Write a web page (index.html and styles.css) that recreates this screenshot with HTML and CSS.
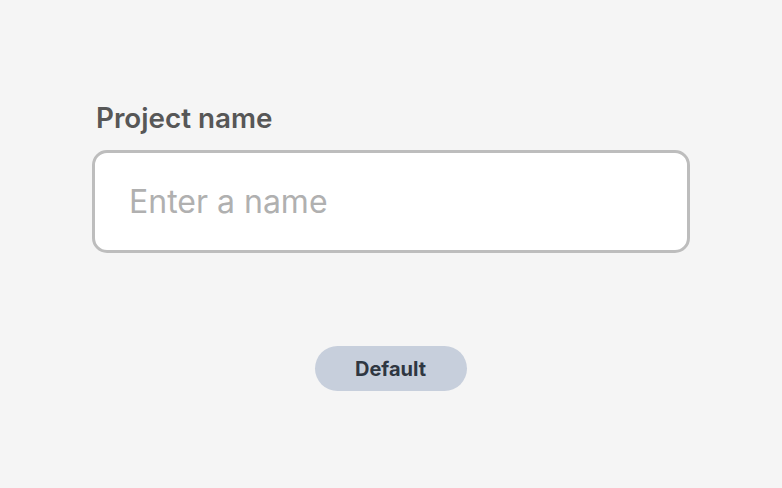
FILE: index.html
```html
<!DOCTYPE html>
<html>
<head>
<meta charset="utf-8">
<link rel="stylesheet" href="styles.css">
</head>
<body>
<div class="page">
  <div class="field">
    <label class="label" for="name">Project name</label>
    <input class="input" id="name" type="text" placeholder="Enter a name">
  </div>
  <div class="actions">
    <button class="btn">Default</button>
  </div>
</div>
</body>
</html>
```
FILE: styles.css
```css
html, body {
  margin: 0;
  padding: 0;
  background: #f5f5f5;
  font-family: Inter, "Noto Sans", sans-serif;
}
.page {
  width: 782px;
  height: 488px;
  box-sizing: border-box;
  padding: 101px 92px 0 92px;
  display: flex;
  flex-direction: column;
}
.field {
  display: flex;
  flex-direction: column;
  gap: 15px;
}
.label {
  padding-left: 4px;
  font-size: 27.8px;
  font-weight: 600;
  color: #575757;
  line-height: 34px;
}
.input {
  box-sizing: border-box;
  width: 598px;
  height: 103px;
  border: 3px solid #bdbdbd;
  border-radius: 15px;
  background: #ffffff;
  padding: 0 34px;
  font-family: Inter, "Noto Sans", sans-serif;
  font-size: 32px;
  color: #333;
  outline: none;
}
.input::placeholder {
  color: #b0b0b0;
}
.actions {
  display: flex;
  justify-content: center;
  margin-top: 93px;
  width: 598px;
}
.btn {
  width: 152px;
  height: 45px;
  border: none;
  border-radius: 23px;
  background: #c7cfdc;
  color: #2f3742;
  font-family: Inter, "Noto Sans", sans-serif;
  font-size: 20px;
  font-weight: 700;
  padding: 0;
  margin-left: -1px;
}
```
